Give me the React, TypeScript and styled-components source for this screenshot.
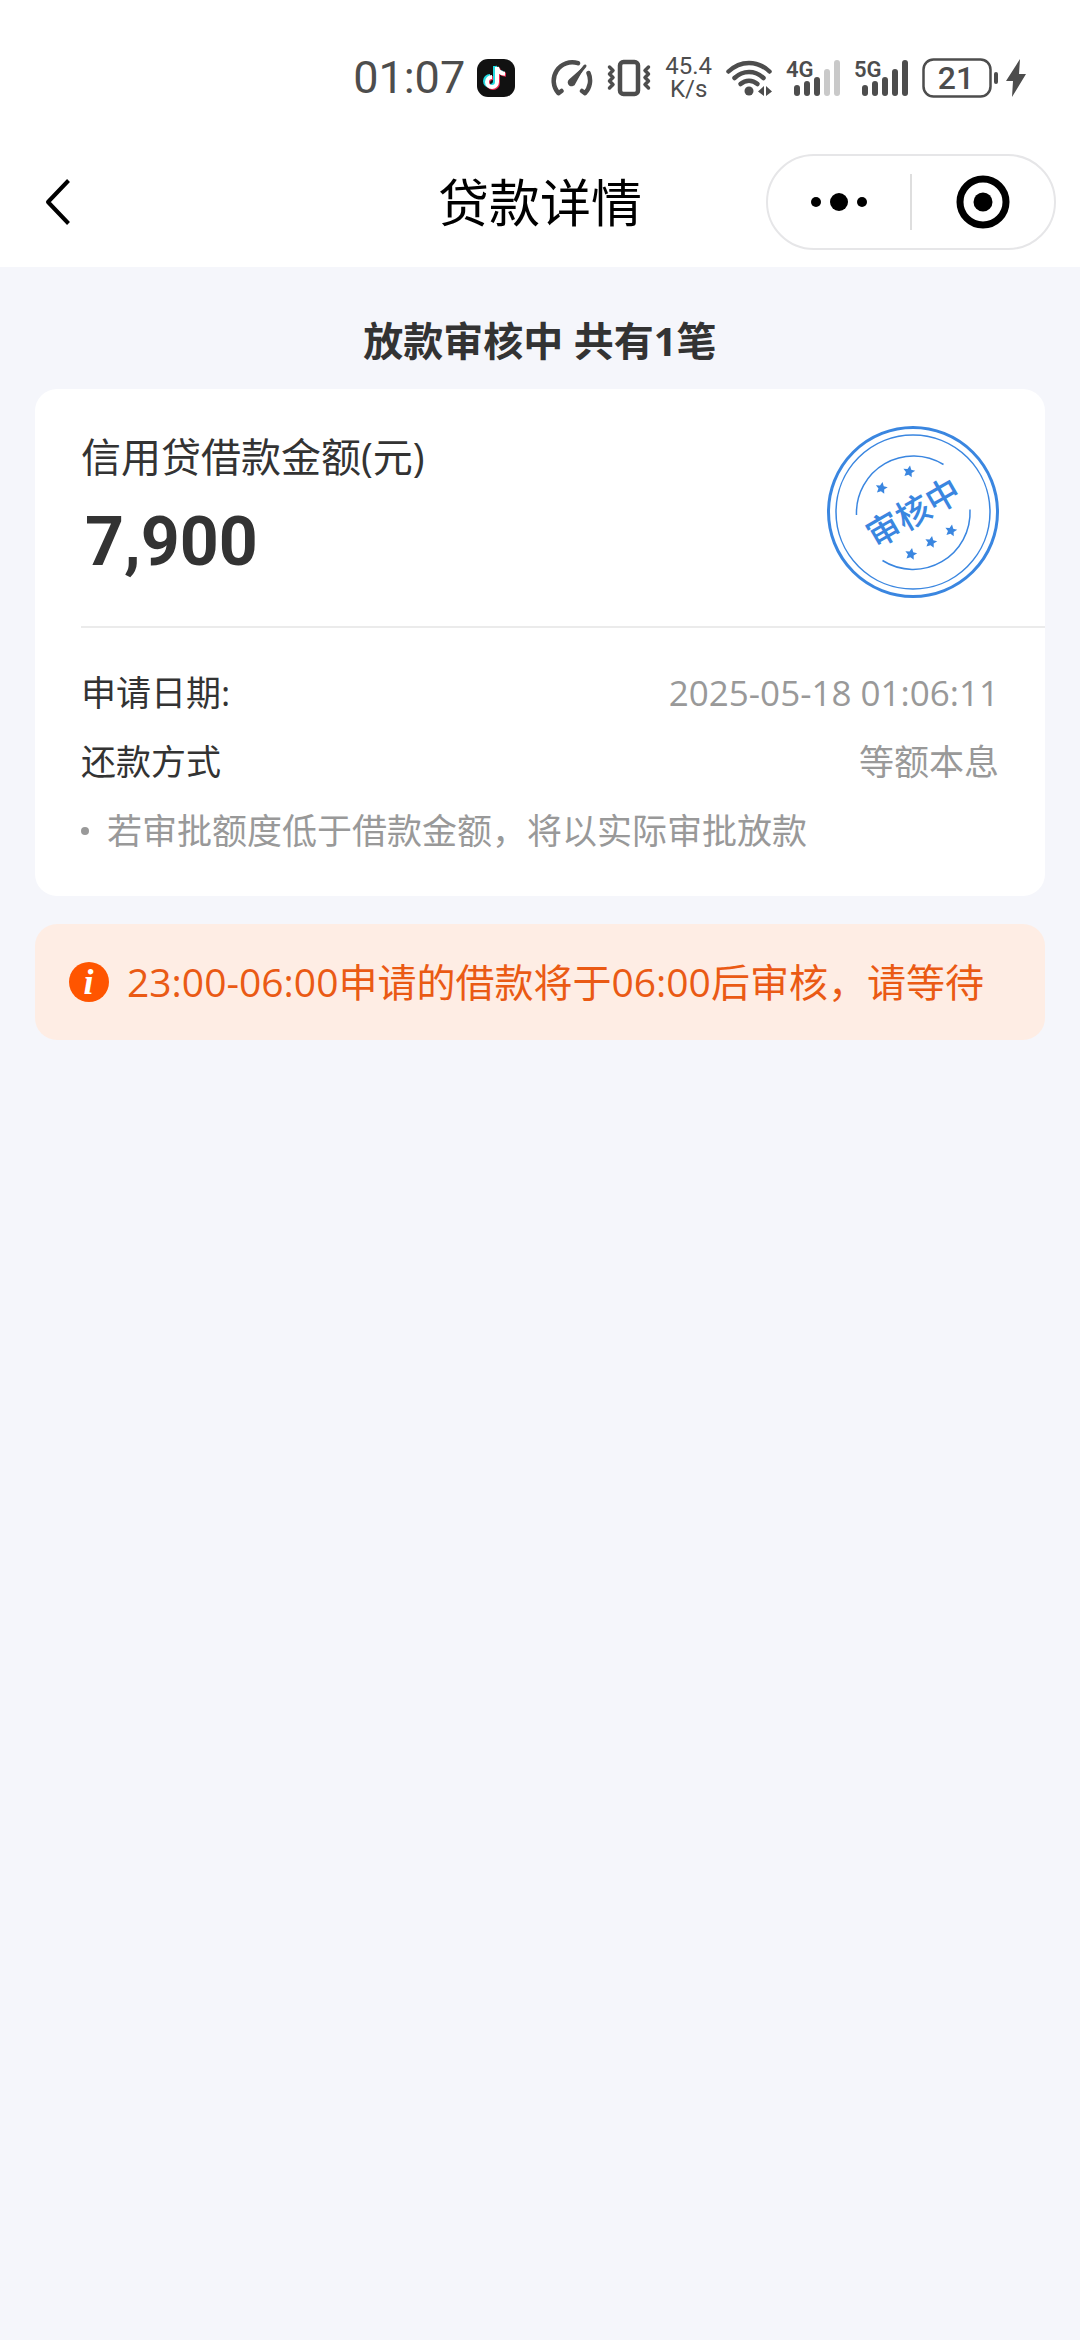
import React from 'react';
import styled, { createGlobalStyle } from 'styled-components';

const ink = '#333333';
const muted = '#999999';
const statusInk = '#4d4d4d';
const stampBlue = '#3a86e0';
const uiFont = '"Open Sans", "Noto Sans CJK SC", sans-serif';

const GlobalStyle = createGlobalStyle`
  * { box-sizing: border-box; }
  body {
    margin: 0;
    background: #f5f6fb;
    color: ${ink};
    font-family: ${uiFont};
  }
  h1, h2, p, dl, dd, ul { margin: 0; padding: 0; }
  svg { display: block; flex: none; }
`;

const Page = styled.div`
  min-height: 100vh;
  background: #f5f6fb;
`;

const TopArea = styled.header`
  background: #ffffff;
`;

const StatusBar = styled.div`
  display: flex;
  align-items: center;
  justify-content: flex-end;
  gap: 14px;
  height: 136px;
  padding: 20px 54px 0 24px;
  color: ${statusInk};
  font-family: Roboto, sans-serif;
`;

const Clock = styled.div`
  display: flex;
  align-items: center;
  gap: 12px;
  margin-right: 22px;
  font-size: 45px;
  line-height: 54px;
`;

const Speed = styled.div`
  display: grid;
  font-size: 24px;
  line-height: 23px;
  text-align: center;
`;

const BatteryGroup = styled.div`
  display: flex;
  align-items: center;
  gap: 8px;
`;

const NavBar = styled.nav`
  display: grid;
  grid-template-columns: 1fr auto 1fr;
  align-items: center;
  height: 131px;
  padding: 0 24px;
`;

const BackButton = styled.button`
  display: flex;
  align-items: center;
  justify-content: center;
  width: 68px;
  height: 96px;
  padding: 0;
  border: 0;
  background: none;
  cursor: pointer;
`;

const NavTitle = styled.h1`
  color: #000000;
  font-size: 51px;
  font-weight: 400;
  line-height: 72px;
`;

const Capsule = styled.div`
  display: flex;
  align-items: center;
  justify-self: end;
  width: 290px;
  height: 96px;
  border: 2px solid #e6e6e8;
  border-radius: 48px;
`;

const CapsuleButton = styled.button`
  display: flex;
  flex: 1;
  align-items: center;
  justify-content: center;
  height: 100%;
  padding: 0;
  border: 0;
  background: none;
  cursor: pointer;
`;

const CapsuleRule = styled.span`
  width: 2px;
  height: 56px;
  background: #dedede;
`;

const Content = styled.main`
  padding: 38px 35px;
`;

const Summary = styled.h2`
  padding-bottom: 12px;
  font-size: 40px;
  font-weight: 700;
  line-height: 72px;
  text-align: center;
`;

const Card = styled.section`
  padding: 37px 0 31px 46px;
  border-radius: 22px;
  background: #ffffff;
`;

const CardHead = styled.div`
  display: flex;
  justify-content: space-between;
  padding: 0 46px 28px 0;
  border-bottom: 2px solid #ebebeb;
`;

const AmountLabel = styled.p`
  font-size: 40px;
  line-height: 62px;
`;

const Amount = styled.p`
  padding: 12px 0 0 4px;
  font-family: Roboto, sans-serif;
  font-size: 68px;
  font-weight: 700;
  line-height: 84px;
`;

const Details = styled.dl`
  padding: 30px 46px 0 0;
`;

const DetailRow = styled.div`
  display: flex;
  justify-content: space-between;
  font-size: 35px;
  line-height: 69px;
`;

const DetailValue = styled.dd`
  color: ${muted};
`;

const Note = styled.p`
  display: flex;
  align-items: center;
  gap: 18px;
  color: ${muted};
  font-size: 35px;
  line-height: 69px;

  &::before {
    content: '';
    width: 8px;
    height: 8px;
    border-radius: 50%;
    background: ${muted};
  }
`;

const Notice = styled.aside`
  display: flex;
  align-items: center;
  gap: 18px;
  min-height: 116px;
  margin-top: 28px;
  padding: 26px 34px;
  border-radius: 22px;
  background: #feede4;
  color: #ea5a14;
  font-size: 39px;
  line-height: 64px;
`;

const notePath = 'M19 8v15a5 5 0 1 1-5-5M19 8c.5 4 3.5 6.500 8 6.700';

const ClockAppIcon = () => (
  <svg width="38" height="38" viewBox="0 0 38 38" aria-hidden="true">
    <rect width="38" height="38" rx="11" fill="#111111" />
    <g fill="none" strokeWidth="4" strokeLinejoin="round">
      <path d={notePath} stroke="#25d9e0" transform="translate(-1 -1)" />
      <path d={notePath} stroke="#e8284f" transform="translate(2 1)" />
      <path d={notePath} stroke="#ffffff" transform="translate(1 0)" />
    </g>
  </svg>
);

const GaugeIcon = () => (
  <svg width="42" height="38" viewBox="0 0 42 38" fill="none" stroke={statusInk} strokeWidth="4.5" strokeLinecap="round" strokeLinejoin="round" aria-hidden="true">
    <path d="M27 4.200A18.500 18.500 0 0 0 7.500 34.200L10.500 32" />
    <path d="M37.500 14A18.500 18.500 0 0 1 34 34.200L31 32" />
    <path d="M35 5.500 24.500 24.500a4 4 0 1 1-6.300-4.300z" fill={statusInk} stroke="none" />
    <path d="M34 7 22 22" strokeWidth="3" />
  </svg>
);

const VibrateIcon = () => (
  <svg width="44" height="38" viewBox="0 0 44 38" fill="none" stroke={statusInk} strokeLinecap="round" strokeLinejoin="round" aria-hidden="true">
    <rect x="13" y="3" width="18" height="32" rx="3.5" strokeWidth="4.5" />
    <path d="M2.500 8 6 11.500 2.500 15 6 18.500 2.500 22 6 25.500 2.500 29" strokeWidth="3.5" />
    <path d="M41.500 8 38 11.500 41.500 15 38 18.500 41.500 22 38 25.500 41.500 29" strokeWidth="3.5" />
  </svg>
);

const WifiIcon = () => (
  <svg width="46" height="38" viewBox="0 0 46 38" fill="none" stroke={statusInk} strokeWidth="4.5" strokeLinecap="round" aria-hidden="true">
    <path d="M2.500 12.500c12-11.500 29-11.500 41 0" />
    <path d="M8.500 19c8.500-8 20.500-8 29 0" />
    <path d="M14.500 25c5-4.500 12-4.500 17 0" />
    <circle cx="23" cy="32" r="4.5" fill={statusInk} stroke="none" />
    <path d="M38 27v10l-6-4.500zM40 27v10l6-4.500z" fill={statusInk} stroke="none" />
  </svg>
);

const SignalIcon = ({ label, strength }: { label: string; strength: number }) => {
  const tops = [25, 21, 17, 9, 0];
  return (
    <svg width="54" height="58" viewBox="0 -10 54 58" role="img" aria-label={label}>
      <text x="0" y="18" fontFamily="Roboto, sans-serif" fontSize="22" fontWeight="600" fill={statusInk}>
        {label}
      </text>
      {tops.map((top, i) => (
        <rect key={top} x={8 + i * 10} y={top + 1} width="6" height={36 - top} rx="3" fill={i < strength ? statusInk : '#c9c9c9'} />
      ))}
    </svg>
  );
};

const BatteryIcon = () => (
  <svg width="76" height="40" viewBox="0 0 76 40" role="img" aria-label="21">
    <rect x="1.5" y="1.5" width="67" height="37" rx="10" fill="none" stroke={statusInk} strokeWidth="2.5" />
    <rect x="72" y="14" width="4" height="12" rx="2" fill={statusInk} />
    <text x="34" y="31" textAnchor="middle" fontFamily="Roboto, sans-serif" fontSize="32" fontWeight="500" fill={statusInk}>
      21
    </text>
  </svg>
);

const BoltIcon = () => (
  <svg width="20" height="38" viewBox="0 0 20 38" fill={statusInk} aria-hidden="true">
    <path d="M14 0 0 22h7L6 38 20 15h-7z" />
  </svg>
);

const BackIcon = () => (
  <svg width="26" height="48" viewBox="0 0 26 48" fill="none" stroke="#000000" strokeWidth="4" strokeLinejoin="round" aria-hidden="true">
    <path d="M23.500 2.500 3 24l20.500 21.500" />
  </svg>
);

const MoreIcon = () => (
  <svg width="56" height="18" viewBox="0 0 56 18" aria-hidden="true">
    <circle cx="5" cy="9" r="5" />
    <circle cx="28" cy="9" r="9" />
    <circle cx="51" cy="9" r="5" />
  </svg>
);

const CloseIcon = () => (
  <svg width="54" height="54" viewBox="0 0 54 54" aria-hidden="true">
    <circle cx="27" cy="27" r="23" fill="none" stroke="#000000" strokeWidth="7" />
    <circle cx="27" cy="27" r="9.5" />
  </svg>
);

const starPath = 'M0-6 1.900-2.200 6-1.800 2.900 1.100 3.700 5.200 0 3.200-3.700 5.200-2.900 1.100-6-1.800-1.900-2.200z';
const stars = [[54.5, 62], [82, 45.5], [84, 128], [104, 116], [124, 104.5]];

const StampIcon = () => (
  <svg width="172" height="172" viewBox="0 0 172 172" role="img" aria-label="审核中">
    <g fill="none" stroke={stampBlue}>
      <circle cx="86" cy="86" r="84.5" strokeWidth="3" />
      <circle cx="86" cy="86" r="77" strokeWidth="1.5" />
      <path d="M29.500 89A57 57 0 0 1 116.500 38.500" strokeWidth="1.5" />
      <path d="M143 83.500A57 57 0 0 1 55.500 134.500" strokeWidth="1.5" />
    </g>
    {stars.map(([x, y]) => (
      <path key={x} d={starPath} fill={stampBlue} transform={`translate(${x} ${y}) rotate(10)`} />
    ))}
    <text x="86" y="99" textAnchor="middle" transform="rotate(-30 86 86)" fontFamily='"Noto Sans CJK SC", sans-serif' fontSize="34" fontWeight="500" fill={stampBlue}>
      审核中
    </text>
  </svg>
);

const InfoIcon = () => (
  <svg width="40" height="40" viewBox="0 0 40 40" aria-hidden="true">
    <circle cx="20" cy="20" r="20" fill="#ff5500" />
    <text x="19.5" y="32" textAnchor="middle" fontFamily='"Liberation Serif", serif' fontSize="36" fontStyle="italic" fontWeight="700" fill="#ffffff">
      i
    </text>
  </svg>
);

export default function App() {
  return (
    <Page>
      <GlobalStyle />
      <TopArea>
        <StatusBar>
          <Clock>
            01:07
            <ClockAppIcon />
          </Clock>
          <GaugeIcon />
          <VibrateIcon />
          <Speed>
            <span>45.4</span>
            <span>K/s</span>
          </Speed>
          <WifiIcon />
          <SignalIcon label="4G" strength={3} />
          <SignalIcon label="5G" strength={5} />
          <BatteryGroup>
            <BatteryIcon />
            <BoltIcon />
          </BatteryGroup>
        </StatusBar>
        <NavBar>
          <BackButton type="button" aria-label="返回">
            <BackIcon />
          </BackButton>
          <NavTitle>贷款详情</NavTitle>
          <Capsule>
            <CapsuleButton type="button" aria-label="更多">
              <MoreIcon />
            </CapsuleButton>
            <CapsuleRule />
            <CapsuleButton type="button" aria-label="关闭">
              <CloseIcon />
            </CapsuleButton>
          </Capsule>
        </NavBar>
      </TopArea>
      <Content>
        <Summary>放款审核中 共有1笔</Summary>
        <Card>
          <CardHead>
            <div>
              <AmountLabel>信用贷借款金额(元)</AmountLabel>
              <Amount>7,900</Amount>
            </div>
            <StampIcon />
          </CardHead>
          <Details>
            <DetailRow>
              <dt>申请日期:</dt>
              <DetailValue>2025-05-18 01:06:11</DetailValue>
            </DetailRow>
            <DetailRow>
              <dt>还款方式</dt>
              <DetailValue>等额本息</DetailValue>
            </DetailRow>
          </Details>
          <Note>若审批额度低于借款金额，将以实际审批放款</Note>
        </Card>
        <Notice>
          <InfoIcon />
          <p>23:00-06:00申请的借款将于06:00后审核，请等待</p>
        </Notice>
      </Content>
    </Page>
  );
}
